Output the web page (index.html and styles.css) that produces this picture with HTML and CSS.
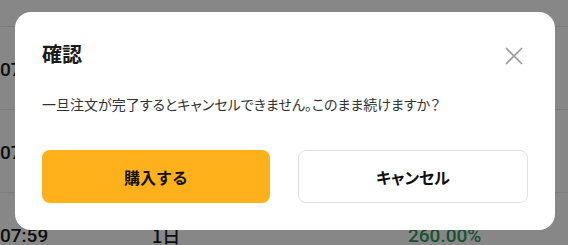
FILE: index.html
```html
<!DOCTYPE html>
<html>
	<head>
		<meta charset="utf-8">
		<title>確認</title>
		<link rel="stylesheet" href="styles.css">
	</head>
	<body>
		<div class="list">
			<div class="row first"></div>
			<div class="row">
				<span class="time">07:59</span>
				<span class="term">1日</span>
				<span class="rate">260.00%</span>
			</div>
			<div class="row">
				<span class="time">07:59</span>
				<span class="term">1日</span>
				<span class="rate">260.00%</span>
			</div>
			<div class="row">
				<span class="time">07:59</span>
				<span class="term">1日</span>
				<span class="rate">260.00%</span>
			</div>
		</div>

		<div class="mask">
			<div class="dialog">
				<div class="dialog_head">
					<h2>確認</h2>
					<span class="close">
						<svg width="18" height="18" viewBox="0 0 18 18">
							<path d="M1 1L17 17M17 1L1 17" stroke="#9a9a9a" stroke-width="1.6" fill="none"/>
						</svg>
					</span>
				</div>
				<p class="dialog_text">一旦注文が完了するとキャンセルできません。このまま続けますか？</p>
				<div class="dialog_btns">
					<button class="btn btn_buy">購入する</button>
					<button class="btn btn_cancel">キャンセル</button>
				</div>
			</div>
		</div>
	</body>
</html>
```

FILE: styles.css
```css
*{
	margin: 0;
	padding: 0;
	box-sizing: border-box;
}
html, body{
	height: 100%;
	overflow: hidden;
}
body{
	background: #fff;
	font-family: "Noto Sans CJK JP", "Noto Sans", sans-serif;
	color: #1a1a1a;
}

/* 背面のリスト */
.list .row{
	height: 83px;
	border-bottom: 1px solid #e8e8e8;
	display: grid;
	grid-template-columns: 152px 256px 1fr;
	align-items: center;
	padding-top: 2px;
	font-family: Roboto, "Noto Sans CJK JP", sans-serif;
	font-size: 19px;
	font-weight: 500;
}
.list .row.first{
	height: 27px;
}
.list .term{
	font-family: "Noto Sans CJK JP", sans-serif;
	font-size: 18px;
}
.list .rate{
	color: #2f9a5c;
}

/* マスク */
.mask{
	position: fixed;
	left: 0;
	top: 0;
	width: 100%;
	height: 100%;
	background: rgba(0,0,0,0.47);
	display: flex;
	align-items: flex-start;
	padding: 12px 0 0 15px;
}
.dialog{
	width: 540px;
	background: #fff;
	border-radius: 16px;
	padding: 27px;
}
.dialog_head{
	display: flex;
	justify-content: space-between;
	align-items: center;
	height: 29px;
}
.dialog_head h2{
	font-size: 20px;
	font-weight: bold;
	line-height: 29px;
	color: #1a1a1a;
}
.dialog_head .close{
	width: 18px;
	height: 18px;
	margin-top: 5px;
	margin-right: 5px;
	cursor: pointer;
}
.dialog_head .close svg{
	display: block;
}
.dialog_text{
	margin-top: 25px;
	font-size: 14px;
	line-height: 22px;
	color: #333;
	font-feature-settings: "palt";
}
.dialog_btns{
	display: flex;
	gap: 28px;
	margin-top: 35px;
}
.btn{
	flex: 1;
	height: 53px;
	border-radius: 8px;
	font-family: "Noto Sans CJK JP", sans-serif;
	font-size: 16px;
	font-weight: bold;
	color: #111;
	cursor: pointer;
}
.btn_buy{
	background: #ffb11b;
	border: none;
}
.btn_cancel{
	background: #fff;
	border: 1px solid #dde1e6;
	font-feature-settings: "palt";
}
```
